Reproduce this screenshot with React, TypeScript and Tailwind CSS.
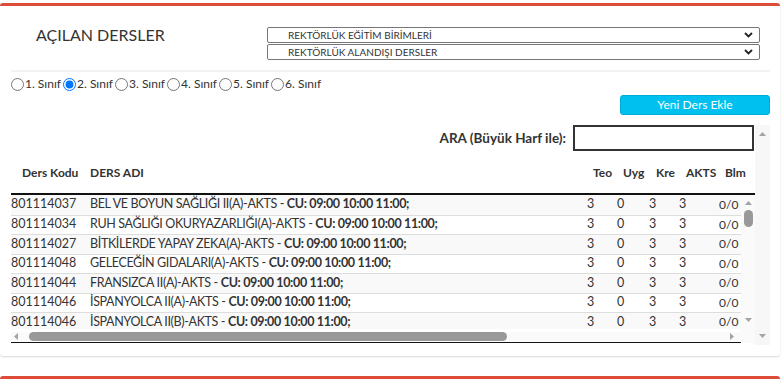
import React from "react";

const rows = [
  { code: "801114037", name: "BEL VE BOYUN SAĞLIĞI II(A)-AKTS" },
  { code: "801114034", name: "RUH SAĞLIĞI OKURYAZARLIĞI(A)-AKTS" },
  { code: "801114027", name: "BİTKİLERDE YAPAY ZEKA(A)-AKTS" },
  { code: "801114048", name: "GELECEĞİN GIDALARI(A)-AKTS" },
  { code: "801114044", name: "FRANSIZCA II(A)-AKTS" },
  { code: "801114046", name: "İSPANYOLCA II(A)-AKTS" },
  { code: "801114046", name: "İSPANYOLCA II(B)-AKTS" },
];

const Arrow = ({ dir }: { dir: "up" | "down" | "left" | "right" }) => {
  const pts = {
    up: "0,4 3.5,0 7,4",
    down: "0,0 7,0 3.5,4",
    left: "4,0 4,7 0,3.5",
    right: "0,0 0,7 4,3.5",
  }[dir];
  const vertical = dir === "up" || dir === "down";
  return (
    <svg width={vertical ? 7 : 4} height={vertical ? 4 : 7} viewBox={vertical ? "0 0 7 4" : "0 0 4 7"}>
      <polygon points={pts} fill="#a3a3a3" />
    </svg>
  );
};

const Chevron = () => (
  <svg width="9" height="6" viewBox="0 0 9 6">
    <polyline points="1,1 4.5,4.5 8,1" fill="none" stroke="#222" strokeWidth="1.8" />
  </svg>
);

const SelectBox = ({ label }: { label: string }) => (
  <div className="flex h-[16px] items-center justify-between rounded-[2px] border border-[#767676] bg-white pl-[20px] pr-[6px]">
    <span className="text-[10px] leading-none text-[#333]">{label}</span>
    <Chevron />
  </div>
);

export default function App() {
  return (
    <div className="min-h-[383px] bg-white pt-[3px] text-[#333]" style={{ fontFamily: "Lato, 'Open Sans', sans-serif" }}>
      <div className="mr-[4px] rounded-[3px] border-t-[3px] border-[#dd4b39] shadow-[0_1px_2px_rgba(0,0,0,0.15)]">
        {/* header */}
        <div className="flex h-[64px] items-start">
          <h1 className="ml-[36px] mt-[18px] w-[231px] text-[16px] leading-[22px] text-[#333]">AÇILAN DERSLER</h1>
          <div className="mt-[21px] flex w-[493px] flex-col gap-[1px]">
            <SelectBox label="REKTÖRLÜK EĞİTİM BİRİMLERİ" />
            <SelectBox label="REKTÖRLÜK ALANDIŞI DERSLER" />
          </div>
        </div>
        <div className="mx-[10px] ml-[11px] h-[2px] bg-[#f2f2f2]" />

        <div className="pl-[11px] pr-[10px]">
          {/* radios */}
          <div className="mt-[5px] flex h-[14px] items-center gap-[2px] text-[12px]">
            {[1, 2, 3, 4, 5, 6].map((n) => (
              <label key={n} className="flex items-center">
                <input type="radio" name="sinif" defaultChecked={n === 2} className="m-0 h-[13px] w-[13px]" />
                <span className="ml-[1px]">{n}. Sınıf</span>
              </label>
            ))}
          </div>

          {/* button */}
          <div className="mt-[4px] flex justify-end">
            <button className="h-[20px] w-[150px] rounded-[3px] border border-[#00acd6] bg-[#00c0ef] text-[12px] leading-none text-white">
              Yeni Ders Ekle
            </button>
          </div>

          {/* outer scroll region */}
          <div className="mt-[10px] flex h-[220px]">
            <div className="flex w-[744px] flex-col">
              <div className="flex h-[26px] items-center justify-end gap-[7px] pr-[1px]">
                <span className="text-[13.5px] font-bold">ARA (Büyük Harf ile):</span>
                <div className="h-[26px] w-[181px] border-2 border-[#333] bg-white" />
              </div>
              <div className="flex h-[44px] items-center border-b-2 border-[#111] pt-[2px] text-[12px] font-bold">
                <div className="w-[79px] whitespace-nowrap pl-[11px]">Ders Kodu</div>
                <div className="flex-1">DERS ADI</div>
                <div className="w-[30px]">Teo</div>
                <div className="w-[33px]">Uyg</div>
                <div className="w-[30px]">Kre</div>
                <div className="w-[39px]">AKTS</div>
                <div className="w-[30px]">Blm</div>
              </div>
              <div className="flex h-[148px] flex-col border-b border-[#111]">
                <div className="flex h-[134px]">
                  <div className="w-[730px] overflow-hidden text-[12.5px]">
                    {rows.map((r, i) => (
                      <div
                        key={i}
                        className={`flex h-[19.5px] items-center whitespace-nowrap ${i > 0 ? "border-t border-[#ddd]" : ""} ${i % 2 === 0 ? "bg-[#f9f9f9]" : "bg-white"}`}
                      >
                        <div className="w-[79px]">{r.code}</div>
                        <div className="min-w-0 flex-1 overflow-hidden tracking-[-0.35px]">
                          {r.name} - <b>CU: 09:00 10:00 11:00;</b>
                        </div>
                        <div className="w-[30px]">3</div>
                        <div className="w-[32px]">0</div>
                        <div className="w-[30px]">3</div>
                        <div className="w-[40px]">3</div>
                        <div className="w-[22px] text-[12px]">0/0</div>
                      </div>
                    ))}
                  </div>
                  <div className="flex w-[14px] flex-col items-center bg-[#fafafa] pt-[6px]">
                    <Arrow dir="up" />
                    <div className="mt-[5px] h-[17px] w-[9px] rounded-full bg-[#999]" />
                    <div className="flex-1" />
                    <div className="mb-[7px]">
                      <Arrow dir="down" />
                    </div>
                  </div>
                </div>
                <div className="flex h-[14px] items-center">
                  <div className="flex w-[730px] items-center bg-[#fafafa] pl-[3px] pr-[7px]">
                    <Arrow dir="left" />
                    <div className="ml-[11px] h-[9px] w-[478px] rounded-full bg-[#999]" />
                    <div className="flex-1" />
                    <Arrow dir="right" />
                  </div>
                  <div className="h-[14px] w-[14px] bg-[#fafafa]" />
                </div>
              </div>
            </div>
            <div className="flex w-[15px] flex-col items-center bg-[#f7f7f7] pb-[7px] pt-[7px]">
              <Arrow dir="up" />
              <div className="flex-1" />
              <Arrow dir="down" />
            </div>
          </div>
        </div>
        <div className="h-[11px]" />
      </div>

      <div className="mr-[4px] mt-[20px] h-[10px] rounded-[3px] border-t-[3px] border-[#dd4b39] shadow-[0_1px_2px_rgba(0,0,0,0.15)]" />
    </div>
  );
}
